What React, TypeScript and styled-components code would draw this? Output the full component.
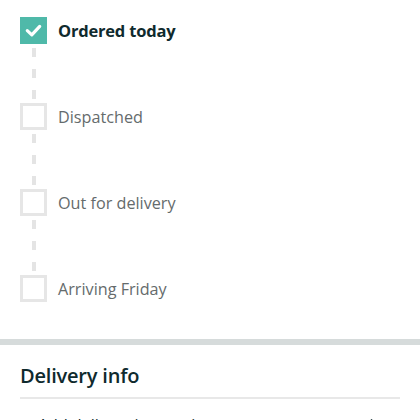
import React from 'react';
import styled, { createGlobalStyle } from 'styled-components';
import { ChevronRight } from 'lucide-react';

const GlobalStyle = createGlobalStyle`
  body {
    margin: 0;
    background: #ffffff;
    font-family: 'Open Sans', 'Noto Sans', sans-serif;
  }
`;

const Page = styled.div`
  width: 420px;
  height: 420px;
  overflow: hidden;
  background: #ffffff;
`;

const Tracker = styled.div`
  padding: 17px 20px 37px;
  display: flex;
  flex-direction: column;
`;

const Step = styled.div`
  display: flex;
  align-items: center;
  gap: 11px;
  height: 27px;
`;

const Box = styled.div<{ $done: boolean }>`
  box-sizing: border-box;
  width: 27px;
  height: 27px;
  flex: none;
  display: flex;
  align-items: center;
  justify-content: center;
  background: ${(p) => (p.$done ? '#4fb9a9' : '#ffffff')};
  border: ${(p) => (p.$done ? 'none' : '3px solid #e6e6e6')};
`;

const Label = styled.span<{ $done: boolean }>`
  font-size: ${(p) => (p.$done ? '16.5px' : '16.2px')};
  font-weight: ${(p) => (p.$done ? 700 : 400)};
  color: ${(p) => (p.$done ? '#0f2a2d' : '#656b6c')};
  letter-spacing: ${(p) => (p.$done ? '-0.2px' : '0')};
`;

const Connector = styled.div`
  width: 4px;
  height: 59px;
  margin-left: 11.5px;
  background: repeating-linear-gradient(
    to bottom,
    transparent 0,
    transparent 4px,
    #e4e4e4 4px,
    #e4e4e4 13px,
    transparent 13px,
    transparent 21px
  );
`;

const Band = styled.div`
  height: 6px;
  background: #d6dbdb;
`;

const Section = styled.section`
  padding: 0 20px;
`;

const Heading = styled.h2`
  margin: 0;
  padding: 17px 0 7px;
  font-size: 20px;
  line-height: 28px;
  font-weight: 600;
  color: #0f2a2d;
  letter-spacing: -0.2px;
`;

const Divider = styled.div`
  height: 2px;
  background: #e8e8e8;
`;

const Row = styled.div`
  display: flex;
  align-items: center;
  justify-content: space-between;
  height: 52px;
  padding: 0 16px 0 18px;
  font-size: 16px;
  color: #0f2a2d;
`;

const steps = [
  { label: 'Ordered today', done: true },
  { label: 'Dispatched', done: false },
  { label: 'Out for delivery', done: false },
  { label: 'Arriving Friday', done: false }
];

const Check: React.FC = () => (
  <svg width="17" height="17" viewBox="0 0 17 17" fill="none">
    <path d="M2.3 8.6 L6.8 12.8 L14.7 4.4" stroke="#ffffff" strokeWidth="3.2" strokeLinecap="round" strokeLinejoin="round" />
  </svg>
);

const App: React.FC = () => (
  <Page>
    <GlobalStyle />
    <Tracker>
      {steps.map(({ label, done }, i) => (
        <React.Fragment key={label}>
          {i > 0 && <Connector />}
          <Step>
            <Box $done={done}>{done && <Check />}</Box>
            <Label $done={done}>{label}</Label>
          </Step>
        </React.Fragment>
      ))}
    </Tracker>
    <Band />
    <Section>
      <Heading>Delivery info</Heading>
      <Divider />
      <Row>
        <span>Add delivery instructions</span>
        <ChevronRight size={20} strokeWidth={2} color="#0f2a2d" />
      </Row>
    </Section>
  </Page>
);

export default App;
